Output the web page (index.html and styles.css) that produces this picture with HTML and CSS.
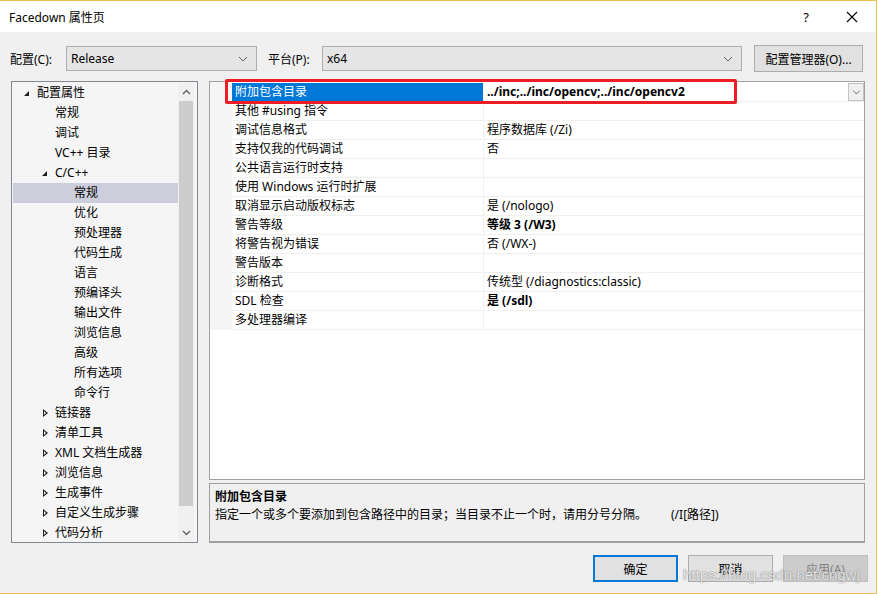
FILE: index.html
```html
<!DOCTYPE html>
<html lang="zh-CN">
<head>
  <meta charset="UTF-8">
  <title>Facedown 属性页</title>
  <link rel="stylesheet" href="styles.css">
</head>
<body>
<div class="window">

  <div class="titlebar">
    <span class="title">Facedown 属性页</span>
    <span class="help">?</span>
    <span class="close">
      <svg width="12" height="12" viewBox="0 0 12 12"><path d="M1 1 L11 11 M11 1 L1 11" stroke="#000" stroke-width="1.1" fill="none"/></svg>
    </span>
  </div>

  <div class="toolbar">
    <label class="lbl">配置(C):</label>
    <div class="combo combo-config">
      <span>Release</span>
      <svg class="chev" width="10" height="6" viewBox="0 0 10 6"><path d="M1 1 L5 5 L9 1" stroke="#606060" fill="none"/></svg>
    </div>
    <label class="lbl lbl-platform">平台(P):</label>
    <div class="combo combo-platform">
      <span>x64</span>
      <svg class="chev" width="10" height="6" viewBox="0 0 10 6"><path d="M1 1 L5 5 L9 1" stroke="#606060" fill="none"/></svg>
    </div>
    <button class="btn btn-manager">配置管理器(O)...</button>
  </div>

  <div class="main">
    <div class="tree">
      <ul class="tree-list">
        <li class="lv0"><span class="tri open"></span>配置属性</li>
        <li class="lv1">常规</li>
        <li class="lv1">调试</li>
        <li class="lv1">VC++ 目录</li>
        <li class="lv1 parent"><span class="tri open"></span>C/C++</li>
        <li class="lv2 selected">常规</li>
        <li class="lv2">优化</li>
        <li class="lv2">预处理器</li>
        <li class="lv2">代码生成</li>
        <li class="lv2">语言</li>
        <li class="lv2">预编译头</li>
        <li class="lv2">输出文件</li>
        <li class="lv2">浏览信息</li>
        <li class="lv2">高级</li>
        <li class="lv2">所有选项</li>
        <li class="lv2">命令行</li>
        <li class="lv1 parent"><span class="tri closed"></span>链接器</li>
        <li class="lv1 parent"><span class="tri closed"></span>清单工具</li>
        <li class="lv1 parent"><span class="tri closed"></span>XML 文档生成器</li>
        <li class="lv1 parent"><span class="tri closed"></span>浏览信息</li>
        <li class="lv1 parent"><span class="tri closed"></span>生成事件</li>
        <li class="lv1 parent"><span class="tri closed"></span>自定义生成步骤</li>
        <li class="lv1 parent"><span class="tri closed"></span>代码分析</li>
      </ul>
      <div class="vscroll">
        <div class="arrow">
          <svg width="9" height="6" viewBox="0 0 9 6"><path d="M1 5 L4.5 1.5 L8 5" stroke="#606060" stroke-width="1.4" fill="none"/></svg>
        </div>
        <div class="thumb"></div>
        <div class="arrow">
          <svg width="9" height="6" viewBox="0 0 9 6"><path d="M1 1 L4.5 4.5 L8 1" stroke="#606060" stroke-width="1.4" fill="none"/></svg>
        </div>
      </div>
    </div>

    <div class="right">
      <div class="grid">
        <div class="row active">
          <div class="name">附加包含目录</div>
          <div class="value bold">../inc;../inc/opencv;../inc/opencv2</div>
          <div class="dropbtn">
            <svg width="9" height="5" viewBox="0 0 9 5"><path d="M1 0.5 L4.5 4 L8 0.5" stroke="#707070" fill="none"/></svg>
          </div>
        </div>
        <div class="row"><div class="name">其他 #using 指令</div><div class="value"></div></div>
        <div class="row"><div class="name">调试信息格式</div><div class="value">程序数据库 (/Zi)</div></div>
        <div class="row"><div class="name">支持仅我的代码调试</div><div class="value">否</div></div>
        <div class="row"><div class="name">公共语言运行时支持</div><div class="value"></div></div>
        <div class="row"><div class="name">使用 Windows 运行时扩展</div><div class="value"></div></div>
        <div class="row"><div class="name">取消显示启动版权标志</div><div class="value">是 (/nologo)</div></div>
        <div class="row"><div class="name">警告等级</div><div class="value bold">等级 3 (/W3)</div></div>
        <div class="row"><div class="name">将警告视为错误</div><div class="value">否 (/WX-)</div></div>
        <div class="row"><div class="name">警告版本</div><div class="value"></div></div>
        <div class="row"><div class="name">诊断格式</div><div class="value">传统型 (/diagnostics:classic)</div></div>
        <div class="row"><div class="name">SDL 检查</div><div class="value bold">是 (/sdl)</div></div>
        <div class="row"><div class="name">多处理器编译</div><div class="value"></div></div>
        <div class="highlight-box"></div>
      </div>
      <div class="desc">
        <div class="desc-title">附加包含目录</div>
        <div class="desc-text">指定一个或多个要添加到包含路径中的目录；当目录不止一个时，请用分号分隔。<span class="switch">(/I[路径])</span></div>
      </div>
    </div>
  </div>

  <div class="footer">
    <button class="btn btn-ok">确定</button>
    <button class="btn">取消</button>
    <button class="btn btn-disabled">应用(A)</button>
    <span class="watermark">https://blog.csdn.net/cngwj</span>
  </div>

</div>
</body>
</html>
```

FILE: styles.css
```css
* {
  margin: 0;
  padding: 0;
  box-sizing: border-box;
}

body {
  width: 878px;
  height: 594px;
  overflow: hidden;
  background: #fff;
  font-family: "Noto Sans", "Noto Sans CJK SC", sans-serif;
  font-size: 12px;
  color: #000;
}

.window {
  position: relative;
  width: 877px;
  height: 594px;
  background: #f0f0f0;
  border-top: 1px solid #eebf4f;
  border-right: 1px solid #eebf4f;
  border-bottom: 1px solid #eebf4f;
}

/* title bar */

.titlebar {
  height: 31px;
  background: #fff;
  display: flex;
  align-items: center;
  padding-left: 9px;
}

.title {
  flex: 1;
  font-size: 12px;
}

.help {
  width: 16px;
  margin-right: 30px;
  font-size: 13px;
  text-align: center;
}

.close {
  width: 16px;
  margin-right: 16px;
  display: flex;
  justify-content: center;
}

/* config row */

.toolbar {
  height: 49px;
  display: flex;
  align-items: center;
  padding: 4px 0 0 10px;
}

.lbl {
  width: 56px;
}

.lbl-platform {
  width: 54px;
  margin-left: 11px;
}

.combo {
  height: 25px;
  background: #e5e5e5;
  border: 1px solid #adadad;
  display: flex;
  align-items: center;
  padding: 0 8px 0 4px;
}

.combo span {
  flex: 1;
}

.combo-config {
  width: 191px;
}

.combo-platform {
  width: 420px;
}

.btn {
  font-family: "Noto Sans", "Noto Sans CJK SC", sans-serif;
  font-size: 12px;
  background: #e1e1e1;
  border: 1px solid #adadad;
  color: #000;
}

.btn-manager {
  width: 109px;
  height: 27px;
  margin-left: 12px;
}

/* main area */

.main {
  display: flex;
  height: 462px;
  padding-left: 11px;
}

.tree {
  width: 187px;
  height: 462px;
  border: 1px solid #828790;
  background: #f5f5f5;
  display: flex;
  padding: 1px 3px 1px 1px;
}

.tree-list {
  list-style: none;
  flex: 1;
  padding-top: 0;
}

.tree-list li {
  height: 20px;
  line-height: 20px;
  display: flex;
  align-items: center;
  white-space: nowrap;
}

.lv0 { padding-left: 9px; }
.lv1 { padding-left: 42px; }
.lv1.parent { padding-left: 27px; }
.lv2 { padding-left: 61px; }

.tree-list li.selected {
  background: #cccedb;
}

.tri {
  width: 15px;
  height: 20px;
  position: relative;
}

.tri.open::after {
  content: "";
  position: absolute;
  left: 2px;
  top: 8px;
  border-left: 5px solid transparent;
  border-bottom: 5px solid #1e1e1e;
}

.tri.closed::after {
  content: "";
  position: absolute;
  left: 3px;
  top: 6px;
  width: 0;
  height: 0;
  border-top: 4px solid transparent;
  border-bottom: 4px solid transparent;
  border-left: 5px solid #1e1e1e;
}

.tri.closed::before {
  content: "";
  position: absolute;
  left: 4px;
  top: 8px;
  border-top: 2px solid transparent;
  border-bottom: 2px solid transparent;
  border-left: 2.5px solid #f5f5f5;
  z-index: 1;
}

.vscroll {
  width: 16px;
  display: flex;
  flex-direction: column;
  background: #f0f0f0;
}

.vscroll .arrow {
  height: 17px;
  display: flex;
  align-items: center;
  justify-content: center;
}

.vscroll .thumb {
  margin: 1px 1px;
  height: 405px;
  background: #cdcdcd;
}

.vscroll .thumb + .arrow {
  margin-top: auto;
}

/* property grid */

.right {
  margin-left: 11px;
  width: 656px;
  display: flex;
  flex-direction: column;
}

.grid {
  position: relative;
  height: 399px;
  background: #fff;
  border: 1px solid #a0a0a0;
  padding: 1px 0 0 22px;
}

.row {
  height: 19px;
  display: flex;
  border-bottom: 1px solid #f0f0f0;
  position: relative;
}

.row .name {
  width: 252px;
  padding-left: 3px;
  line-height: 18px;
  border-right: 1px solid #f0f0f0;
  white-space: nowrap;
}

.row .value {
  flex: 1;
  padding-left: 3px;
  line-height: 18px;
  white-space: nowrap;
}

.bold {
  font-weight: bold;
}

.row.active .name {
  background: #0078d7;
  color: #fff;
}

.dropbtn {
  width: 16px;
  height: 18px;
  border: 1px solid #c4c4c4;
  background: #f0f0f0;
  display: flex;
  align-items: center;
  justify-content: center;
}

.grid::before {
  content: "";
  position: absolute;
  left: 0;
  top: 0;
  width: 22px;
  height: 248px;
  background: #f5f5f5;
}

.highlight-box {
  position: absolute;
  left: 15px;
  top: -3px;
  width: 512px;
  height: 25px;
  border: 3px solid #ee1c25;
  border-radius: 2px;
}

.desc {
  margin-top: 3px;
  height: 60px;
  border: 1px solid #a0a0a0;
  border-bottom-width: 2px;
  background: #f0f0f0;
  padding: 3px 5px;
}

.desc-title {
  font-weight: bold;
  line-height: 19px;
}

.desc-text {
  line-height: 18px;
}

.switch {
  margin-left: 24px;
}

/* buttons */

.footer {
  display: flex;
  justify-content: flex-end;
  gap: 10px;
  padding: 12px 8px 0 0;
  position: relative;
}

.footer .btn {
  width: 85px;
  height: 27px;
}

.btn-ok {
  border: 2px solid #0078d7 !important;
}

.btn-disabled {
  background: #cccccc !important;
  border-color: #bfbfbf !important;
  color: #838383 !important;
}

.watermark {
  position: absolute;
  left: 683px;
  top: 23px;
  font-family: "Liberation Sans", sans-serif;
  font-size: 15px;
  color: rgba(255, 255, 255, 0.85);
  text-shadow: 0 0 1px rgba(90, 90, 90, 0.9), 0 0 2px rgba(150, 150, 150, 0.6);
  white-space: nowrap;
}
```
